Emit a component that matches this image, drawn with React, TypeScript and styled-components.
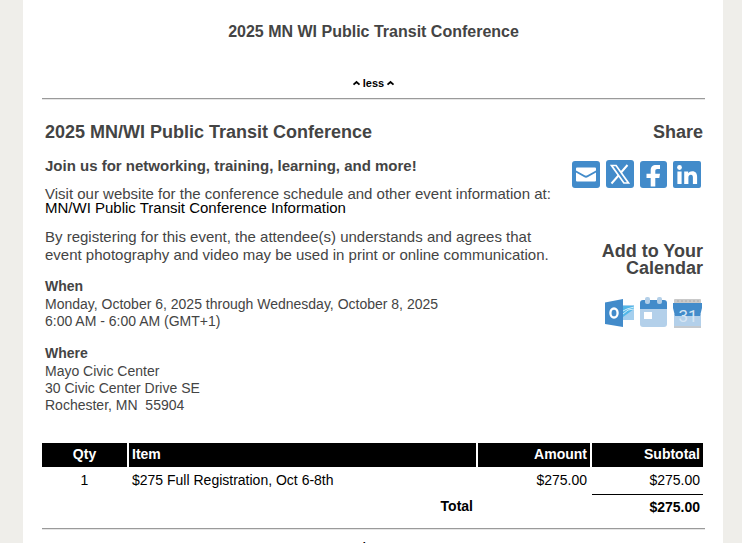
import React from "react";
import styled, { createGlobalStyle } from "styled-components";

const GlobalStyle = createGlobalStyle`
  * { box-sizing: border-box; }
  body {
    margin: 0;
    background: #efeeea;
    color: #444;
    font: 14px/18px "Liberation Sans", Arial, sans-serif;
    overflow: hidden;
  }
`;

const Sheet = styled.main`
  margin: 0 19px 0 23px;
  padding: 21px 18px 0 19px;
  background: #fff;
`;

const PageTitle = styled.h1`
  margin: 0;
  text-align: center;
  font-size: 16px;
  line-height: 22px;
`;

const Toggle = styled.button`
  display: flex;
  align-items: center;
  justify-content: center;
  gap: 2px;
  width: 100%;
  padding: 0;
  border: 0;
  background: none;
  color: #000;
  font: bold 11px/14px "Liberation Sans", Arial, sans-serif;
`;

const TopToggle = styled(Toggle)`
  margin-top: 33px;
`;

const BottomToggle = styled(Toggle)`
  margin-top: 9px;
`;

const Rule = styled.hr`
  margin: 8px 0 0;
  border: 0;
  height: 2px;
  background: #9a9a9a;
  border-bottom: 1px solid #e6e6e6;
`;

const Body = styled.div`
  display: flex;
  justify-content: space-between;
  gap: 20px;
  padding: 21px 2px 0 3px;
`;

const Details = styled.section`
  flex: 1;
  min-width: 0;
`;

const Heading = styled.h2`
  margin: 0;
  font-size: 18px;
  line-height: 22px;
`;

const Lead = styled.h3`
  margin: 14px 0 0;
  font-size: 15px;
  line-height: 18px;
`;

const Intro = styled.p`
  margin: 12px 0 0;
  font-size: 15px;
  line-height: 14px;
`;

const InfoLink = styled.a`
  color: #000;
  text-decoration: none;
`;

const Notice = styled.p`
  margin: 13px 0 0;
  font-size: 15px;
`;

const Block = styled.section`
  margin-top: 14px;

  & + & {
    margin-top: 15px;
  }
`;

const BlockTitle = styled.h4`
  margin: 0;
  font-size: 14px;
  line-height: 17px;
`;

const BlockText = styled.p`
  margin: 0;
  line-height: 18px;
  white-space: pre-wrap;

  & + & {
    line-height: 17px;
  }
`;

const Aside = styled.aside`
  width: 132px;
  text-align: right;
`;

const CalendarTitle = styled(Heading)`
  margin-top: 54px;
  line-height: 17px;
`;

const IconRow = styled.nav`
  display: flex;
  justify-content: flex-end;
  gap: 4px;
  margin-top: 16px;
`;

const CalendarRow = styled(IconRow)`
  margin-top: 20px;
`;

const IconLink = styled.a`
  display: block;
  line-height: 0;
`;

const Orders = styled.table`
  width: calc(100% - 2px);
  margin-top: 29px;
  border-collapse: separate;
  border-spacing: 0;
  table-layout: fixed;
  color: #000;
`;

const HeadCell = styled.th<{ $align?: string; $w?: string }>`
  width: ${(p) => p.$w ?? "auto"};
  height: 24px;
  padding: 2px 3px 4px;
  background: #000;
  color: #fff;
  text-align: ${(p) => p.$align ?? "left"};
  line-height: 18px;

  & + & {
    border-left: 2px solid #fff;
  }
`;

const Cell = styled.td<{ $align?: string }>`
  padding: 4px 3px 5px;
  text-align: ${(p) => p.$align ?? "left"};

  & + & {
    border-left: 2px solid #fff;
  }
`;

const TotalCell = styled.td`
  padding: 0 0 0 2px;
  vertical-align: top;
  text-align: right;
  font-weight: bold;
`;

const TotalLabel = styled.div`
  padding: 3px 3px 5px;
`;

const TotalAmount = styled.div`
  padding: 3px 3px 4px;
  border-top: 1px solid #000;
`;

const Caret = () => (
  <svg width="9" height="6" viewBox="0 0 9 6" aria-hidden="true">
    <path d="M1.500 4.700L4.500 2L7.500 4.700" fill="none" stroke="#000" strokeWidth="1.800" />
  </svg>
);

const BLUE = "#428bca";

const Mail = () => (
  <svg width="30" height="30" viewBox="0 0 30 30" aria-hidden="true">
    <rect x="1" y="2" width="28" height="27" rx="3" fill={BLUE} />
    <path d="M5 9.500a1 1 0 0 1 1-1h18a1 1 0 0 1 1 1v2l-8.600 4.800q-1.400.8-2.800 0L5 11.500z" fill="#fff" />
    <path d="M5 13.500l8 4.600q2 1.100 4 0l8-4.600V21.500a1 1 0 0 1-1 1H6a1 1 0 0 1-1-1z" fill="#fff" />
  </svg>
);

const XLogo = () => (
  <svg width="30" height="30" viewBox="0 0 30 30" aria-hidden="true">
    <rect x="1" y="1" width="28" height="28" rx="3" fill={BLUE} />
    <path d="M6.500 6.500h4.600L23.500 24h-4.600z" fill="none" stroke="#fff" strokeWidth="1.700" />
    <path d="M22.500 6L16 13.500M13.500 16.500L6.500 24.500" stroke="#fff" strokeWidth="2" />
  </svg>
);

const Facebook = () => (
  <svg width="30" height="30" viewBox="0 0 30 30" aria-hidden="true">
    <rect x="1" y="2" width="27" height="27" rx="3" fill={BLUE} />
    <path d="M11.700 27.500V19H7.500v-4.200h4.200v-3.500c0-3.600 2-5.300 5.300-5.300h4v3.900h-2.700c-1.500 0-2 .8-2 2v2.900h4.700l-.7 4.200h-4v8.500z" fill="#fff" />
  </svg>
);

const LinkedIn = () => (
  <svg width="30" height="30" viewBox="0 0 30 30" aria-hidden="true">
    <rect x="0" y="2" width="28" height="27" rx="2" fill={BLUE} />
    <circle cx="6.500" cy="8.500" r="2.400" fill="#fff" />
    <path d="M4.400 12.500h4.200V25H4.400zM11.200 12.500h4v1.700c.8-1.300 2.200-2 4-2 3.700 0 4.900 2.300 4.900 5.800v7h-4.200v-6.300c0-1.600-.2-3-2-3-1.900 0-2.500 1.400-2.500 3V25h-4.200z" fill="#fff" />
  </svg>
);

const Outlook = () => (
  <svg width="30" height="34" viewBox="0 0 30 34" aria-hidden="true">
    <rect x="17" y="8" width="12" height="15" fill="#a5cfee" />
    <path d="M18 9h11v3l-11 8z" fill="#52b7e8" />
    <path d="M18 14l4-2 7-2M18 17l5-4 6-1" stroke="#d4effb" fill="none" />
    <path d="M0 5.500L18 2v28L0 27z" fill={BLUE} />
    <ellipse cx="9" cy="16" rx="3.600" ry="4.500" fill="none" stroke="#fff" strokeWidth="2.300" />
  </svg>
);

const Calendar = () => (
  <svg width="30" height="34" viewBox="0 0 30 34" aria-hidden="true">
    <path d="M1 11h27v16a3 3 0 0 1-3 3H4a3 3 0 0 1-3-3z" fill="#b3d0ea" />
    <path d="M4 3h21a3 3 0 0 1 3 3v6H1V6a3 3 0 0 1 3-3z" fill={BLUE} />
    <rect x="6" y="0" width="5" height="7" rx="2" fill="#b3cfe8" />
    <rect x="18" y="0" width="5" height="7" rx="2" fill="#b3cfe8" />
    <rect x="5" y="15" width="8" height="7" fill="#fff" />
  </svg>
);

const GoogleCalendar = () => (
  <svg width="30" height="34" viewBox="0 0 30 34" aria-hidden="true">
    <rect x="1" y="2" width="27" height="5" rx="1" fill="#c9c9c9" />
    <path d="M4 4h22" stroke="#aaa" strokeDasharray="2 2" />
    <path d="M1 17h27v13H1z" fill="#b3d0ea" />
    <path d="M0 6h29v5l-2 8H2l-2-8z" fill={BLUE} />
    <path d="M1 30h27" stroke="#c4c9ce" strokeWidth="2" />
    <text x="15" y="25" textAnchor="middle" fontFamily="Roboto, sans-serif" fontSize="17" fill="#d7e6f4">31</text>
  </svg>
);

export default function App() {
  return (
    <>
      <GlobalStyle />
      <Sheet>
        <PageTitle>2025 MN WI Public Transit Conference</PageTitle>
        <TopToggle type="button"><Caret />less<Caret /></TopToggle>
        <Rule />
        <Body>
          <Details>
            <Heading>2025 MN/WI Public Transit Conference</Heading>
            <Lead>Join us for networking, training, learning, and more!</Lead>
            <Intro>
              Visit our website for the conference schedule and other event information at:
              <br />
              <InfoLink href="#information">MN/WI Public Transit Conference Information</InfoLink>
            </Intro>
            <Notice>
              By registering for this event, the attendee(s) understands and agrees that
              <br />
              event photography and video may be used in print or online communication.
            </Notice>
            <Block>
              <BlockTitle>When</BlockTitle>
              <BlockText>Monday, October 6, 2025 through Wednesday, October 8, 2025</BlockText>
              <BlockText>6:00 AM - 6:00 AM (GMT+1)</BlockText>
            </Block>
            <Block>
              <BlockTitle>Where</BlockTitle>
              <BlockText>Mayo Civic Center</BlockText>
              <BlockText>30 Civic Center Drive SE</BlockText>
              <BlockText>{"Rochester, MN  55904"}</BlockText>
            </Block>
          </Details>
          <Aside>
            <Heading>Share</Heading>
            <IconRow aria-label="Share">
              <IconLink href="#email" aria-label="Email"><Mail /></IconLink>
              <IconLink href="#x" aria-label="X"><XLogo /></IconLink>
              <IconLink href="#facebook" aria-label="Facebook"><Facebook /></IconLink>
              <IconLink href="#linkedin" aria-label="LinkedIn"><LinkedIn /></IconLink>
            </IconRow>
            <CalendarTitle>Add to Your Calendar</CalendarTitle>
            <CalendarRow aria-label="Add to your calendar">
              <IconLink href="#outlook" aria-label="Outlook"><Outlook /></IconLink>
              <IconLink href="#ical" aria-label="iCalendar"><Calendar /></IconLink>
              <IconLink href="#google" aria-label="Google Calendar"><GoogleCalendar /></IconLink>
            </CalendarRow>
          </Aside>
        </Body>
        <Orders>
          <thead>
            <tr>
              <HeadCell $w="85px" $align="center">Qty</HeadCell>
              <HeadCell>Item</HeadCell>
              <HeadCell $w="114px" $align="right">Amount</HeadCell>
              <HeadCell $w="113px" $align="right">Subtotal</HeadCell>
            </tr>
          </thead>
          <tbody>
            <tr>
              <Cell $align="center">1</Cell>
              <Cell>$275 Full Registration, Oct 6-8th</Cell>
              <Cell $align="right">$275.00</Cell>
              <Cell $align="right">$275.00</Cell>
            </tr>
            <tr>
              <TotalCell colSpan={2}><TotalLabel>Total</TotalLabel></TotalCell>
              <TotalCell />
              <TotalCell><TotalAmount>$275.00</TotalAmount></TotalCell>
            </tr>
          </tbody>
        </Orders>
        <Rule />
        <BottomToggle type="button"><Caret />less<Caret /></BottomToggle>
      </Sheet>
    </>
  );
}
